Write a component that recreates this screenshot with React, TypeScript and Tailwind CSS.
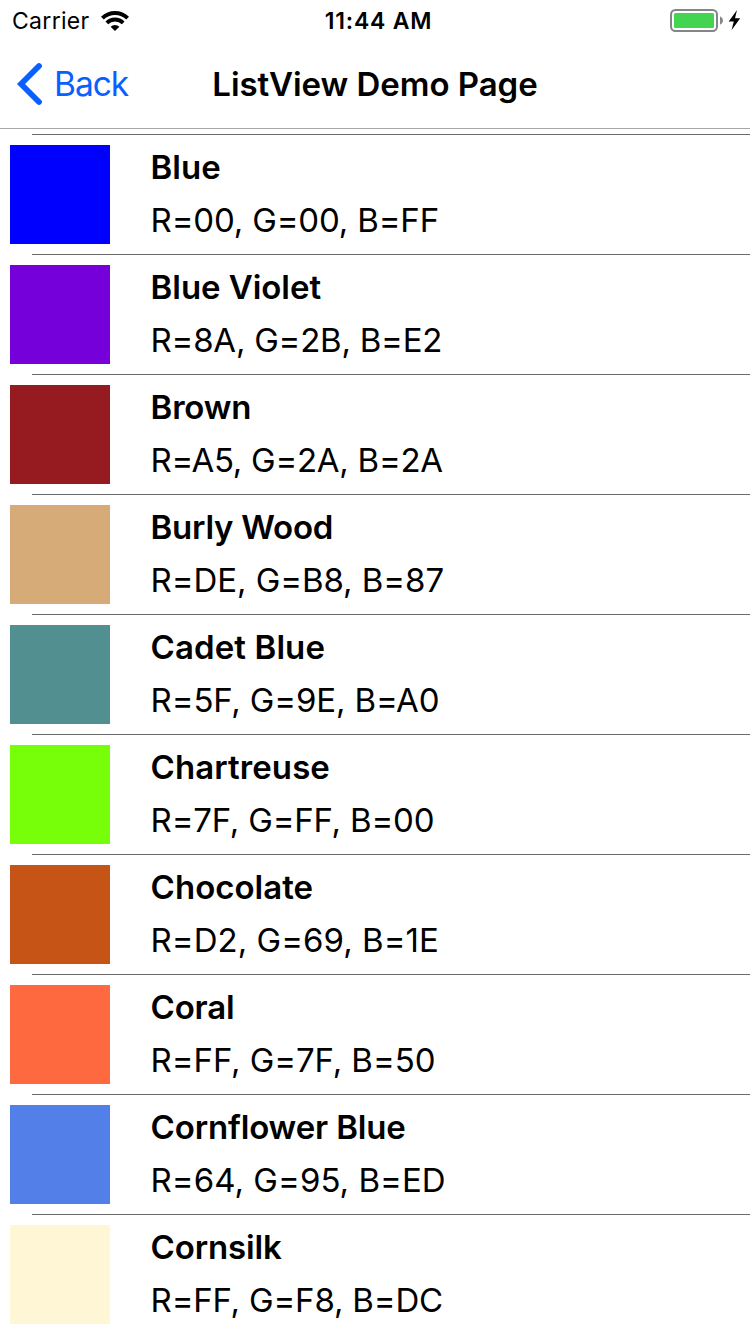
const colors = [
  { name: 'Blue', rgb: 'R=00, G=00, B=FF', swatch: 'bg-[#0000ff]', nameFit: 'tracking-normal', rgbFit: 'tracking-[-0.17px]' },
  { name: 'Blue Violet', rgb: 'R=8A, G=2B, B=E2', swatch: 'bg-[#7600da]', nameFit: 'tracking-[-0.05px]', rgbFit: 'tracking-[-0.24px]' },
  { name: 'Brown', rgb: 'R=A5, G=2A, B=2A', swatch: 'bg-[#951b21]', nameFit: 'tracking-[-0.2px]', rgbFit: 'tracking-[-0.27px]' },
  { name: 'Burly Wood', rgb: 'R=DE, G=B8, B=87', swatch: 'bg-[#d6ab77]', nameFit: 'tracking-[-0.25px]', rgbFit: 'tracking-[-0.07px]' },
  { name: 'Cadet Blue', rgb: 'R=5F, G=9E, B=A0', swatch: 'bg-[#518f90]', nameFit: 'tracking-[0.1px]', rgbFit: 'tracking-[-0.14px]' },
  { name: 'Chartreuse', rgb: 'R=7F, G=FF, B=00', swatch: 'bg-[#76ff09]', nameFit: 'tracking-[0.08px]', rgbFit: 'tracking-[-0.18px]' },
  { name: 'Chocolate', rgb: 'R=D2, G=69, B=1E', swatch: 'bg-[#c75417]', nameFit: 'tracking-[0.02px]', rgbFit: 'tracking-[0.03px]' },
  { name: 'Coral', rgb: 'R=FF, G=7F, B=50', swatch: 'bg-[#ff6940]', nameFit: 'tracking-[-0.2px]', rgbFit: 'tracking-[-0.07px]' },
  { name: 'Cornflower Blue', rgb: 'R=64, G=95, B=ED', swatch: 'bg-[#537fe8]', nameFit: 'tracking-[-0.15px]', rgbFit: 'tracking-[0.04px]' },
  { name: 'Cornsilk', rgb: 'R=FF, G=F8, B=DC', swatch: 'bg-[#fff6d6]', nameFit: 'tracking-[-0.15px]', rgbFit: 'tracking-[-0.18px]' },
];

function WifiIcon() {
  return (
    <svg width="28" height="20" viewBox="0 0 28 20" fill="none" stroke="#000">
      <path d="M1.4 7.1 A18.2 18.2 0 0 1 26.6 7.1" strokeWidth="4" />
      <path d="M5.8 11.9 A11.6 11.6 0 0 1 22.2 11.9" strokeWidth="3.8" />
      <path d="M9.6 15.8 A6.4 6.4 0 0 1 18.4 15.8 L14 20 Z" fill="#000" stroke="none" />
    </svg>
  );
}

function BatteryIcon() {
  return (
    <svg width="72" height="24" viewBox="0 0 72 24">
      <rect x="1" y="1" width="46" height="21" rx="4.5" fill="none" stroke="#858585" strokeWidth="2" />
      <rect x="4" y="4" width="40" height="15" rx="1.5" fill="#43d551" />
      <path d="M50 7.3 Q53 8.7 53 11.5 Q53 14.3 50 15.7 Z" fill="#858585" />
      <path d="M67 1 L58.7 12.6 H63.8 L61.5 21.3 L70.2 9.3 H65 Z" fill="#000" />
    </svg>
  );
}

export default function App() {
  return (
    <div className="flex h-[1334px] w-[750px] flex-col overflow-hidden bg-white font-['Inter',sans-serif] text-black">
      <header className="flex h-[129px] shrink-0 flex-col border-b border-[#a7a7a7]">
        <div className="grid h-10 grid-cols-[250px_257px_1fr] items-center">
          <div className="flex items-center gap-[11px] pl-[12px]">
            <span className="pt-px text-[23px] leading-10 tracking-[0.3px]">Carrier</span>
            <WifiIcon />
          </div>
          <span className="pt-px text-center text-[23px] font-semibold leading-10 tracking-[0.8px]">11:44 AM</span>
          <div className="flex justify-end pr-[8px]">
            <BatteryIcon />
          </div>
        </div>
        <div className="grid h-[88px] grid-cols-[200px_350px_200px] items-center">
          <div className="flex items-center gap-[11px] pl-[17px]">
            <svg width="26" height="44" viewBox="0 0 26 44" fill="none" stroke="#0a60ff" strokeWidth="5.8" strokeLinecap="round">
              <path d="M22 4 L4 22 L22 40" />
            </svg>
            <span className="pt-px text-[33.5px] tracking-[-1px] text-[#0a60ff]">Back</span>
          </div>
          <h1 className="pt-[2px] text-center text-[33px] font-semibold tracking-[-0.04px]">ListView Demo Page</h1>
        </div>
      </header>
      <main className="flex flex-col pt-[5px]">
        {colors.map((c) => (
          <div key={c.name} className="flex h-[120px] shrink-0 flex-col">
            <div className="ml-8 h-px shrink-0 bg-[#6b6b6b]" />
            <div className="flex gap-[40.6px] pl-[10px] pt-[10px]">
              <div className={`h-[99px] w-[100px] ${c.swatch}`} />
              <div className="flex flex-col">
                <span className={`h-[53px] text-[33px] font-semibold leading-[44px] ${c.nameFit}`}>{c.name}</span>
                <span className={`text-[33px] leading-[44px] ${c.rgbFit}`}>{c.rgb}</span>
              </div>
            </div>
          </div>
        ))}
      </main>
    </div>
  );
}
